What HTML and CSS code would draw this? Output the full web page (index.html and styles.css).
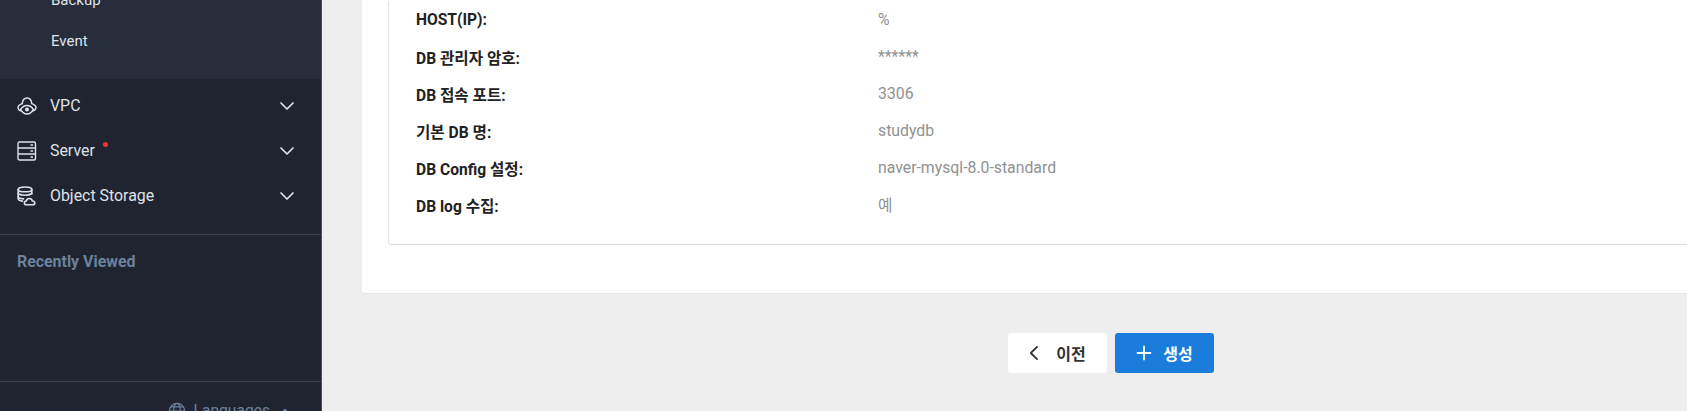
FILE: index.html
```html
<!DOCTYPE html>
<html lang="ko">
<head>
    <meta charset="UTF-8">
    <meta name="viewport" content="width=device-width, initial-scale=1.0">
    <title>DB 생성</title>
    <link rel="stylesheet" href="styles.css">
</head>
<body>
    <aside class="sidebar">
        <div class="submenu">
            <div class="sub-item sub-clipped">Backup</div>
            <div class="sub-item">Event</div>
        </div>

        <nav class="menu">
            <div class="menu-item">
                <svg class="menu-icon" viewBox="0 0 20 20" fill="none" stroke="currentColor" stroke-width="1.500" stroke-linecap="round" stroke-linejoin="round">
                    <path d="M5.200 7.600C5.600 4.200 7.600 2 10 2s4.400 2.200 4.800 5.600C17 8.400 19 9.600 19 11.600c0 1.500-1 2.500-2.400 3.200"/>
                    <path d="M3.400 14.800C2 14.100 1 13.100 1 11.600c0-2 2-3.200 4.200-4"/>
                    <path d="M3.600 13.400C5.200 10.800 7.400 9.400 10 9.400s4.800 1.400 6.400 4C14.800 16.400 12.600 18 10 18s-4.800-1.600-6.400-4.600z"/>
                    <circle cx="10" cy="13.600" r="2" fill="currentColor" stroke="none"/>
                </svg>
                <span class="menu-label">VPC</span>
                <svg class="chevron" viewBox="0 0 16 10" fill="none" stroke="currentColor" stroke-width="1.700" stroke-linecap="round" stroke-linejoin="round"><path d="M2 2l6 6 6-6"/></svg>
            </div>
            <div class="menu-item">
                <svg class="menu-icon" viewBox="0 0 20 20" fill="none" stroke="currentColor" stroke-width="1.400" stroke-linejoin="round">
                    <rect x="1" y="1" width="17.500" height="18" rx="1.500"/>
                    <path d="M1 7h17.500M1 13h17.500"/>
                    <path d="M13.500 4h2.500M13.500 10h2.500M13.500 16h2.500"/>
                </svg>
                <span class="menu-label">Server<i class="dot"></i></span>
                <svg class="chevron" viewBox="0 0 16 10" fill="none" stroke="currentColor" stroke-width="1.700" stroke-linecap="round" stroke-linejoin="round"><path d="M2 2l6 6 6-6"/></svg>
            </div>
            <div class="menu-item">
                <svg class="menu-icon" viewBox="0 0 20 20" fill="none" stroke="currentColor" stroke-width="1.600" stroke-linecap="round" stroke-linejoin="round">
                    <ellipse cx="8" cy="3.400" rx="6.800" ry="2.400"/>
                    <path d="M1.200 3.400v9.400c0 1.100 1.700 2 4.300 2.300"/>
                    <path d="M14.800 3.400v4.400"/>
                    <path d="M1.200 6.800c0 1.300 3 2.400 6.800 2.400 2.800 0 5.400-.6 6.800-1.700"/>
                    <path d="M1.200 10.600c0 1.200 2.200 2.100 5.300 2.300"/>
                    <path d="M9.600 18.800c-1.300 0-2.200-.8-2.200-1.900 0-1 .8-1.800 1.900-1.900.3-1.500 1.500-2.500 3-2.500 1.600 0 2.800 1.100 3 2.500 1.400 0 2.500.8 2.500 1.900s-.9 1.900-2.200 1.900z"/>
                </svg>
                <span class="menu-label">Object Storage</span>
                <svg class="chevron" viewBox="0 0 16 10" fill="none" stroke="currentColor" stroke-width="1.700" stroke-linecap="round" stroke-linejoin="round"><path d="M2 2l6 6 6-6"/></svg>
            </div>
        </nav>

        <section class="recent">
            <h3>Recently Viewed</h3>
        </section>

        <div class="languages">
            <svg class="globe" viewBox="0 0 20 20" fill="none" stroke="currentColor" stroke-width="1.300">
                <circle cx="10" cy="10" r="8.500"/>
                <ellipse cx="10" cy="10" rx="3.800" ry="8.500"/>
                <path d="M1.500 10h17M2.800 5.500h14.400M2.800 14.500h14.400"/>
            </svg>
            <span>Languages</span>
            <svg class="caret" viewBox="0 0 10 6" fill="none" stroke="currentColor" stroke-width="1.500" stroke-linecap="round" stroke-linejoin="round"><path d="M1.500 5L5 1.500 8.500 5"/></svg>
        </div>
    </aside>

    <main class="content">
        <div class="panel">
            <div class="info-card">
                <div class="info-row"><span class="info-label">HOST(IP):</span><span class="info-value">%</span></div>
                <div class="info-row"><span class="info-label">DB 관리자 암호:</span><span class="info-value">******</span></div>
                <div class="info-row"><span class="info-label">DB 접속 포트:</span><span class="info-value">3306</span></div>
                <div class="info-row"><span class="info-label">기본 DB 명:</span><span class="info-value">studydb</span></div>
                <div class="info-row"><span class="info-label">DB Config 설정:</span><span class="info-value">naver-mysql-8.0-standard</span></div>
                <div class="info-row"><span class="info-label">DB log 수집:</span><span class="info-value">예</span></div>
            </div>
        </div>

        <div class="actions">
            <button class="btn btn-prev">
                <svg class="btn-icon" viewBox="0 0 16 16" fill="none" stroke="currentColor" stroke-width="1.800" stroke-linecap="round" stroke-linejoin="round"><path d="M8 1.800L1.800 8 8 14.200"/></svg>
                이전
            </button>
            <button class="btn btn-create">
                <svg class="btn-icon" viewBox="0 0 16 16" fill="none" stroke="currentColor" stroke-width="1.800" stroke-linecap="round"><path d="M8 1.500v13M1.500 8h13"/></svg>
                생성
            </button>
        </div>
    </main>
</body>
</html>
```

FILE: styles.css
```css
html, body {
    height: 411px;
    overflow: hidden;
}

body {
    margin: 0;
    display: flex;
    background-color: #eeeeee;
    font-family: Roboto, "Noto Sans CJK KR", sans-serif;
    font-size: 15.6px;
}

.sidebar {
    flex: 0 0 321px;
    height: 411px;
    overflow: hidden;
    background-color: #1f2430;
    border-right: 1px solid #4a5162;
    color: #dfe2e8;
}

.submenu {
    display: flow-root;
    height: 79px;
    background-color: #272d3a;
    padding-left: 51px;
}

.sub-item {
    height: 41px;
    line-height: 41px;
    font-size: 15px;
}

.sub-clipped {
    margin-top: -20px;
}

.menu {
    padding-top: 4px;
    height: 151px;
    border-bottom: 1px solid #383f52;
}

.menu-item {
    display: flex;
    align-items: center;
    height: 45px;
    padding-left: 17px;
    padding-right: 26px;
}

.menu-icon {
    width: 20px;
    height: 20px;
    margin-right: 13px;
    flex: none;
}

.menu-label {
    flex: 1;
    font-size: 15.9px;
}

.dot {
    display: inline-block;
    width: 5px;
    height: 5px;
    margin-left: 8px;
    border-radius: 50%;
    background-color: #f0382b;
    position: relative;
    top: -9px;
}

.chevron {
    width: 16px;
    height: 10px;
    flex: none;
}

.recent {
    display: flow-root;
    height: 146px;
    padding-left: 17px;
    border-bottom: 1px solid #383f52;
}

.recent h3 {
    margin: 17px 0 0;
    font-size: 15.9px;
    line-height: 20px;
    font-weight: 700;
    color: #6c819c;
}

.languages {
    display: flex;
    align-items: center;
    justify-content: flex-end;
    gap: 8px;
    padding: 20px 31px 0 0;
    color: #6c819c;
}

.globe {
    width: 18px;
    height: 18px;
}

.caret {
    width: 10px;
    height: 6px;
    margin-left: 2px;
}

.content {
    flex: 1;
    min-width: 0;
    padding-left: 40px;
}

.panel {
    height: 294px;
    box-sizing: border-box;
    padding: 1px 0 48px 26px;
    background-color: #fff;
    border-bottom: 1px solid #e6e6e6;
    border-radius: 0 0 0 3px;
}

.info-card {
    height: 100%;
    box-sizing: border-box;
    padding-left: 27px;
    border-left: 1px solid #e2e2e2;
    border-bottom: 1px solid #dfdfdf;
    border-radius: 0 0 0 3px;
}

.info-row {
    display: flex;
    align-items: center;
    height: 37px;
}

.info-label {
    flex: 0 0 462px;
    font-weight: 700;
    color: #222;
}

.info-value {
    font-size: 15.8px;
    color: #919191;
}

.actions {
    display: flex;
    gap: 8px;
    padding: 39px 0 0 646px;
}

.btn {
    display: flex;
    align-items: center;
    justify-content: center;
    gap: 11px;
    width: 99px;
    height: 40px;
    padding: 0;
    border: none;
    border-radius: 3px;
    font-family: inherit;
    font-size: 16px;
    font-weight: 700;
    cursor: pointer;
}

.btn-prev {
    background-color: #fff;
    color: #333;
}

.btn-create {
    background-color: #1a7ddb;
    color: #fff;
}

.btn-icon {
    width: 16px;
    height: 16px;
}
```
